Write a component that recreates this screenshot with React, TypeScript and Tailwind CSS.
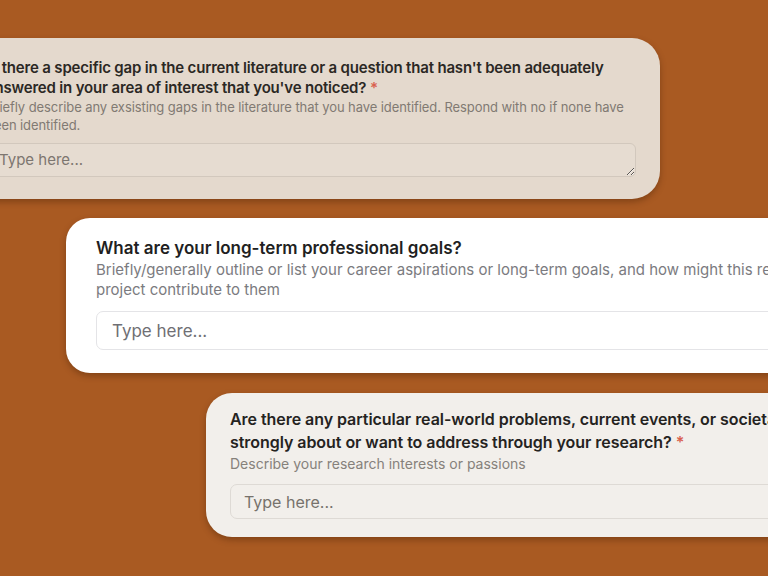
import React from "react";

const font = { fontFamily: "Inter, 'Noto Sans', sans-serif" };

export default function App() {
  return (
    <div
      className="w-[768px] h-[576px] overflow-hidden bg-[#a95a22] flex flex-col pt-[38px]"
      style={font}
    >
      {/* Card 1 */}
      <div className="ml-[-38px] w-[698px] h-[161px] shrink-0 rounded-[28px] bg-[#e4d9cd] shadow-[0_3px_6px_rgba(60,25,0,0.35)] pl-[24px] pr-[24px] pt-[20px] flex flex-col">
        <div className="text-[15px] leading-[20px] font-semibold text-[#2b2824] whitespace-nowrap tracking-[-0.17px]">
          <div>Is there a specific gap in the current literature or a question that hasn't been adequately</div>
          <div>
            answered in your area of interest that you've noticed?{" "}
            <span className="text-[#d9614f]">*</span>
          </div>
        </div>
        <div className="text-[13px] leading-[18px] text-[#817a73] whitespace-nowrap tracking-[-0.08px]">
          <div>Briefly describe any exsisting gaps in the literature that you have identified. Respond with no if none have</div>
          <div>been identified.</div>
        </div>
        <textarea
          placeholder="Type here..."
          className="mt-[9px] h-[34px] w-full rounded-[6px] border border-[#d2c8bd] bg-[#e6dcd1] px-[12px] py-[6px] text-[15px] leading-[20px] text-[#2b2824] placeholder:text-[#7d7670] outline-none"
        />
      </div>

      {/* Card 2 */}
      <div className="ml-[66px] mt-[19px] w-[760px] h-[155px] shrink-0 rounded-[24px] bg-white shadow-[0_3px_6px_rgba(60,25,0,0.35)] pl-[30px] pt-[18px] flex flex-col">
        <div className="text-[17px] leading-[24px] font-semibold text-[#1f1f22] whitespace-nowrap">
          What are your long-term professional goals?
        </div>
        <div className="text-[15px] leading-[20px] text-[#7b7b80] whitespace-nowrap">
          <div>Briefly/generally outline or list your career aspirations or long-term goals, and how might this research</div>
          <div>project contribute to them</div>
        </div>
        <input
          placeholder="Type here..."
          className="mt-[11px] h-[39px] w-[720px] rounded-[7px] border border-[#e4e4e7] bg-white px-[15px] text-[17px] text-[#1f1f22] placeholder:text-[#6f6f74] outline-none"
        />
      </div>

      {/* Card 3 */}
      <div className="ml-[206px] mt-[20px] w-[620px] h-[144px] shrink-0 rounded-[26px] bg-[#f2efeb] shadow-[0_3px_6px_rgba(60,25,0,0.35)] pl-[24px] pt-[15px] flex flex-col">
        <div className="text-[16px] leading-[23px] font-semibold text-[#25231f] whitespace-nowrap tracking-[-0.05px]">
          <div>Are there any particular real-world problems, current events, or societal issues you feel</div>
          <div>
            strongly about or want to address through your research?{" "}
            <span className="text-[#d9614f]">*</span>
          </div>
        </div>
        <div className="text-[14px] leading-[20px] text-[#86817b] whitespace-nowrap">
          Describe your research interests or passions
        </div>
        <input
          placeholder="Type here..."
          className="mt-[10px] h-[35px] w-[580px] rounded-[7px] border border-[#dedad5] bg-[#f2efeb] px-[13px] text-[16px] text-[#25231f] placeholder:text-[#77726c] outline-none"
        />
      </div>
    </div>
  );
}
